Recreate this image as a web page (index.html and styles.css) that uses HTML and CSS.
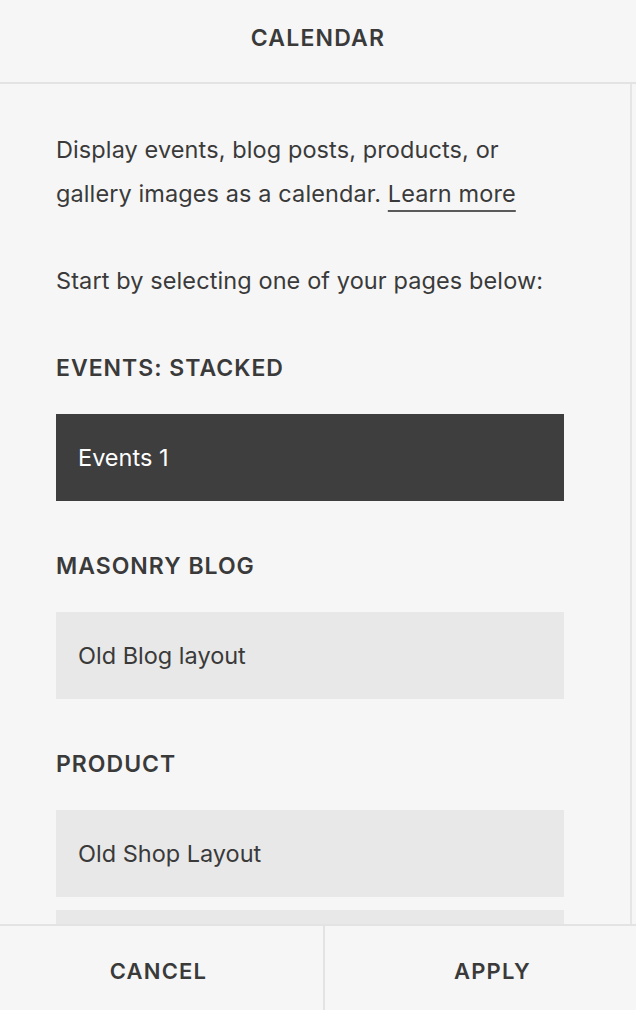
FILE: index.html
```html
<!DOCTYPE html>
<html lang="en">
<head>
  <meta charset="UTF-8">
  <meta name="viewport" content="width=device-width, initial-scale=1.0">
  <title>Calendar</title>
  <link rel="stylesheet" href="styles.css">
</head>
<body>
  <div class="panel">
    <header class="panel-header">
      <h1>CALENDAR</h1>
    </header>

    <div class="panel-body">
      <p class="intro">Display events, blog posts, products, or gallery images as a calendar. <a href="#">Learn more</a></p>
      <p class="intro">Start by selecting one of your pages below:</p>

      <!-- Events -->
      <section class="group">
        <h2>EVENTS: STACKED</h2>
        <button class="page-item active">Events 1</button>
      </section>

      <!-- Blog -->
      <section class="group">
        <h2>MASONRY BLOG</h2>
        <button class="page-item">Old Blog layout</button>
      </section>

      <!-- Products -->
      <section class="group">
        <h2>PRODUCT</h2>
        <button class="page-item">Old Shop Layout</button>
        <button class="page-item"></button>
      </section>
    </div>

    <footer class="panel-footer">
      <button class="cancel">CANCEL</button>
      <button class="apply">APPLY</button>
    </footer>
  </div>
</body>
</html>
```

FILE: styles.css
```css
body {
  margin: 0;
  background: #f6f6f6;
  color: #3a3a3a;
  font-family: 'Inter', 'Liberation Sans', sans-serif;
}

.panel {
  display: flex;
  flex-direction: column;
  width: 636px;
  height: 1010px;
  overflow: hidden;
}

.panel-header {
  flex: none;
  height: 82px;
  border-bottom: 2px solid #e3e3e3;
  display: flex;
  align-items: center;
  justify-content: center;
}

.panel-header h1 {
  margin: 0 0 6px;
  font-size: 23px;
  font-weight: 600;
  letter-spacing: 1.2px;
}

.panel-body {
  flex: 1;
  min-height: 0;
  overflow: hidden;
  width: 574px;
  padding: 44px 0 0 56px;
  border-right: 2px solid #e5e5e5;
  box-sizing: content-box;
}

.intro {
  margin: 0 0 43px;
  width: 500px;
  font-size: 23.5px;
  line-height: 44px;
  letter-spacing: 0.1px;
}

.intro a {
  color: inherit;
  text-decoration: underline;
  text-decoration-thickness: 2px;
  text-underline-offset: 8px;
  text-decoration-color: #5a5a5a;
}

.group {
  margin-bottom: 43px;
}

.group h2 {
  margin: 0 0 24px;
  font-size: 23px;
  font-weight: 600;
  letter-spacing: 1px;
  line-height: 44px;
}

.page-item {
  display: block;
  width: 508px;
  height: 87px;
  margin-bottom: 13px;
  padding: 0 0 0 22px;
  border: none;
  background: #e8e8e8;
  color: #3a3a3a;
  font-family: inherit;
  font-size: 23.5px;
  text-align: left;
  cursor: pointer;
}

.page-item.active {
  background: #3e3e3e;
  color: #ffffff;
}

.panel-footer {
  flex: none;
  height: 84px;
  border-top: 2px solid #e3e3e3;
  display: flex;
}

.panel-footer button {
  padding-top: 6px;
  border: none;
  background: transparent;
  color: #3a3a3a;
  font-family: inherit;
  font-size: 22px;
  font-weight: 600;
  letter-spacing: 1.2px;
  cursor: pointer;
}

.panel-footer .cancel {
  width: 325px;
  padding-right: 12px;
  border-right: 2px solid #e3e3e3;
}

.panel-footer .apply {
  flex: 1;
  padding-left: 30px;
}
```
